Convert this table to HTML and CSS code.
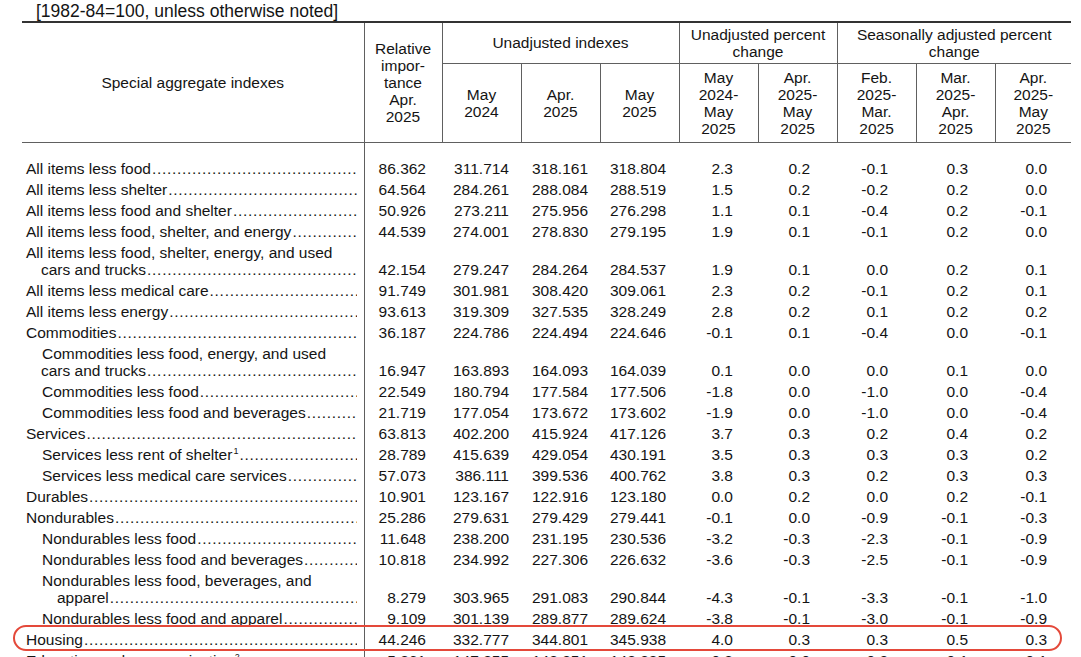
FILE: index.html
```html
<!DOCTYPE html>
<html lang="en">
<head>
<meta charset="utf-8">
<title>Special aggregate indexes</title>
<link rel="stylesheet" href="styles.css">
</head>
<body>
<p class="title">[1982-84=100, unless otherwise noted]</p>
<table class="cpi">
  <colgroup>
    <col class="c-lbl"><col class="c-rel"><col class="c-idx"><col class="c-idx"><col class="c-idx">
    <col class="c-pct"><col class="c-pct"><col class="c-pct"><col class="c-pct"><col class="c-last">
  </colgroup>
  <thead>
    <tr class="h1">
      <th rowspan="2" class="first">Special aggregate indexes</th>
      <th rowspan="2">Relative<br>impor-<br>tance<br>Apr.<br>2025</th>
      <th colspan="3">Unadjusted indexes</th>
      <th colspan="2">Unadjusted percent<br>change</th>
      <th colspan="3" class="last">Seasonally adjusted percent<br>change</th>
    </tr>
    <tr class="h2">
      <th>May<br>2024</th>
      <th>Apr.<br>2025</th>
      <th>May<br>2025</th>
      <th>May<br>2024-<br>May<br>2025</th>
      <th>Apr.<br>2025-<br>May<br>2025</th>
      <th>Feb.<br>2025-<br>Mar.<br>2025</th>
      <th>Mar.<br>2025-<br>Apr.<br>2025</th>
      <th class="last">Apr.<br>2025-<br>May<br>2025</th>
    </tr>
  </thead>
  <tbody>
    <tr class="sp"><td class="lbl"></td><td colspan="9"></td></tr>
    <tr><td class="lbl"><div class="ln lead">All items less food</div></td><td>86.362</td><td>311.714</td><td>318.161</td><td>318.804</td><td>2.3</td><td>0.2</td><td>-0.1</td><td>0.3</td><td>0.0</td></tr>
    <tr><td class="lbl"><div class="ln lead">All items less shelter</div></td><td>64.564</td><td>284.261</td><td>288.084</td><td>288.519</td><td>1.5</td><td>0.2</td><td>-0.2</td><td>0.2</td><td>0.0</td></tr>
    <tr><td class="lbl"><div class="ln lead">All items less food and shelter</div></td><td>50.926</td><td>273.211</td><td>275.956</td><td>276.298</td><td>1.1</td><td>0.1</td><td>-0.4</td><td>0.2</td><td>-0.1</td></tr>
    <tr><td class="lbl"><div class="ln lead">All items less food, shelter, and energy</div></td><td>44.539</td><td>274.001</td><td>278.830</td><td>279.195</td><td>1.9</td><td>0.1</td><td>-0.1</td><td>0.2</td><td>0.0</td></tr>
    <tr><td class="lbl"><div class="ln">All items less food, shelter, energy, and used</div><div class="ln lead cont">cars and trucks</div></td><td>42.154</td><td>279.247</td><td>284.264</td><td>284.537</td><td>1.9</td><td>0.1</td><td>0.0</td><td>0.2</td><td>0.1</td></tr>
    <tr><td class="lbl"><div class="ln lead">All items less medical care</div></td><td>91.749</td><td>301.981</td><td>308.420</td><td>309.061</td><td>2.3</td><td>0.2</td><td>-0.1</td><td>0.2</td><td>0.1</td></tr>
    <tr><td class="lbl"><div class="ln lead">All items less energy</div></td><td>93.613</td><td>319.309</td><td>327.535</td><td>328.249</td><td>2.8</td><td>0.2</td><td>0.1</td><td>0.2</td><td>0.2</td></tr>
    <tr><td class="lbl"><div class="ln lead">Commodities</div></td><td>36.187</td><td>224.786</td><td>224.494</td><td>224.646</td><td>-0.1</td><td>0.1</td><td>-0.4</td><td>0.0</td><td>-0.1</td></tr>
    <tr><td class="lbl l2"><div class="ln">Commodities less food, energy, and used</div><div class="ln lead"><span class="back">cars and trucks</span></div></td><td>16.947</td><td>163.893</td><td>164.093</td><td>164.039</td><td>0.1</td><td>0.0</td><td>0.0</td><td>0.1</td><td>0.0</td></tr>
    <tr><td class="lbl l2"><div class="ln lead">Commodities less food</div></td><td>22.549</td><td>180.794</td><td>177.584</td><td>177.506</td><td>-1.8</td><td>0.0</td><td>-1.0</td><td>0.0</td><td>-0.4</td></tr>
    <tr><td class="lbl l2"><div class="ln lead">Commodities less food and beverages</div></td><td>21.719</td><td>177.054</td><td>173.672</td><td>173.602</td><td>-1.9</td><td>0.0</td><td>-1.0</td><td>0.0</td><td>-0.4</td></tr>
    <tr><td class="lbl"><div class="ln lead">Services</div></td><td>63.813</td><td>402.200</td><td>415.924</td><td>417.126</td><td>3.7</td><td>0.3</td><td>0.2</td><td>0.4</td><td>0.2</td></tr>
    <tr><td class="lbl l2"><div class="ln lead"><span>Services less rent of shelter<sup>1</sup></span></div></td><td>28.789</td><td>415.639</td><td>429.054</td><td>430.191</td><td>3.5</td><td>0.3</td><td>0.3</td><td>0.3</td><td>0.2</td></tr>
    <tr><td class="lbl l2"><div class="ln lead">Services less medical care services</div></td><td>57.073</td><td>386.111</td><td>399.536</td><td>400.762</td><td>3.8</td><td>0.3</td><td>0.2</td><td>0.3</td><td>0.3</td></tr>
    <tr><td class="lbl"><div class="ln lead">Durables</div></td><td>10.901</td><td>123.167</td><td>122.916</td><td>123.180</td><td>0.0</td><td>0.2</td><td>0.0</td><td>0.2</td><td>-0.1</td></tr>
    <tr><td class="lbl"><div class="ln lead">Nondurables</div></td><td>25.286</td><td>279.631</td><td>279.429</td><td>279.441</td><td>-0.1</td><td>0.0</td><td>-0.9</td><td>-0.1</td><td>-0.3</td></tr>
    <tr><td class="lbl l2"><div class="ln lead">Nondurables less food</div></td><td>11.648</td><td>238.200</td><td>231.195</td><td>230.536</td><td>-3.2</td><td>-0.3</td><td>-2.3</td><td>-0.1</td><td>-0.9</td></tr>
    <tr><td class="lbl l2"><div class="ln lead">Nondurables less food and beverages</div></td><td>10.818</td><td>234.992</td><td>227.306</td><td>226.632</td><td>-3.6</td><td>-0.3</td><td>-2.5</td><td>-0.1</td><td>-0.9</td></tr>
    <tr><td class="lbl l2"><div class="ln">Nondurables less food, beverages, and</div><div class="ln lead cont">apparel</div></td><td>8.279</td><td>303.965</td><td>291.083</td><td>290.844</td><td>-4.3</td><td>-0.1</td><td>-3.3</td><td>-0.1</td><td>-1.0</td></tr>
    <tr><td class="lbl l2"><div class="ln lead">Nondurables less food and apparel</div></td><td>9.109</td><td>301.139</td><td>289.877</td><td>289.624</td><td>-3.8</td><td>-0.1</td><td>-3.0</td><td>-0.1</td><td>-0.9</td></tr>
    <tr class="hl"><td class="lbl mark"><div class="ln lead">Housing</div><span class="ring" aria-hidden="true"></span></td><td>44.246</td><td>332.777</td><td>344.801</td><td>345.938</td><td>4.0</td><td>0.3</td><td>0.3</td><td>0.5</td><td>0.3</td></tr>
    <tr><td class="lbl"><div class="ln lead"><span>Education and communication<sup>2</sup></span></div></td><td>5.861</td><td>147.855</td><td>148.351</td><td>148.385</td><td>0.3</td><td>0.0</td><td>0.2</td><td>0.1</td><td>0.1</td></tr>
  </tbody>
</table>
</body>
</html>
```

FILE: styles.css
```css
html, body {
  margin: 0;
  padding: 0;
  background: #ffffff;
}

body {
  font-family: "Liberation Sans", Arial, Helvetica, sans-serif;
  color: #141414;
}

.title {
  margin: 0;
  height: 21px;
  padding-left: 36px;
  font-size: 17.5px;
  line-height: 22px;
  white-space: nowrap;
}

.cpi {
  margin-left: 22px;
  width: 1048px;
  table-layout: fixed;
  border-collapse: collapse;
  font-size: 15.5px;
  border-top: 2px solid #333333;
}

.c-lbl { width: 342px; }
.c-rel { width: 78px; }
.c-idx { width: 79px; }
.c-pct { width: 79px; }
.c-last { width: 76px; }

.cpi th {
  font-weight: normal;
  line-height: 17px;
  padding: 0;
  text-align: center;
  vertical-align: middle;
  border: 1px solid #606060;
}

.cpi th.first { border-left: none; }
.cpi th.last { border-right: none; }

.cpi .h1 th { height: 39px; }
.cpi .h2 th { height: 78px; }

.cpi thead tr.h1 th { border-top: 2px solid #333333; }

.cpi .h1 th[colspan] { padding-bottom: 1px; }

.cpi td {
  padding: 2px 0;
  line-height: 17px;
  text-align: right;
  vertical-align: bottom;
  white-space: nowrap;
}

.cpi .sp td {
  height: 15px;
  padding: 0;
}

.cpi td.lbl {
  text-align: left;
  padding-left: 4px;
  padding-right: 7px;
  border-right: 1px solid #5e5e5e;
  white-space: normal;
}

.cpi td.l2 { padding-left: 20px; }

.ln { white-space: nowrap; }

.lead {
  display: flex;
}

.lead::after {
  content: "..............................................................................................................";
  flex: 1 1 0;
  min-width: 0;
  overflow: hidden;
  letter-spacing: 0.7px;
  padding-left: 1px;
}

.cont { margin-left: 15px; }
.back { margin-left: -1px; }

sup {
  font-size: 9px;
  line-height: 0;
  vertical-align: 6px;
  margin-left: 1px;
}

.cpi td:nth-child(2) { padding-right: 16px; }
.cpi td:nth-child(3) { padding-right: 12px; }
.cpi td:nth-child(4) { padding-right: 12px; }
.cpi td:nth-child(5) { padding-right: 13px; }
.cpi td:nth-child(6) { padding-right: 25px; }
.cpi td:nth-child(7) { padding-right: 27px; }
.cpi td:nth-child(8) { padding-right: 28px; }
.cpi td:nth-child(9) { padding-right: 27px; }
.cpi td:nth-child(10) { padding-right: 24px; }

.cpi td.mark { position: relative; }

.ring {
  position: absolute;
  left: -9px;
  top: -4px;
  width: 1045px;
  height: 22px;
  border: 2px solid #e4493a;
  border-radius: 13px;
  pointer-events: none;
}
```
